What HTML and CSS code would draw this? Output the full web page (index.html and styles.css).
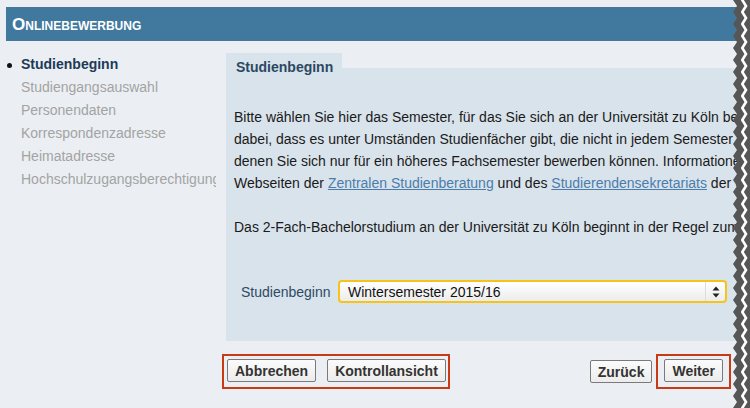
FILE: index.html
```html
<!DOCTYPE html>
<html lang="de">
<head>
<meta charset="utf-8">
<title>Onlinebewerbung</title>
<link rel="stylesheet" href="styles.css">
</head>
<body>
<div class="page">
  <div class="header">Onlinebewerbung</div>
  <div class="columns">
    <ul class="nav">
      <li class="active">Studienbeginn</li>
      <li>Studiengangsauswahl</li>
      <li>Personendaten</li>
      <li>Korrespondenzadresse</li>
      <li>Heimatadresse</li>
      <li>Hochschulzugangsberechtigung</li>
    </ul>
    <div class="main">
      <div class="panel">
        <div class="panel-top">
          <div class="tab">Studienbeginn</div>
          <div class="tab-filler"></div>
        </div>
        <div class="panel-body">
          <p class="text">Bitte wählen Sie hier das Semester, für das Sie sich an der Universität zu Köln bewerben möchten. Beachten Sie<br>dabei, dass es unter Umständen Studienfächer gibt, die nicht in jedem Semester angeboten werden, oder zu<br>denen Sie sich nur für ein höheres Fachsemester bewerben können. Informationen hierzu finden Sie auf den<br>Webseiten der <a href="#">Zentralen Studienberatung</a> und des <a href="#">Studierendensekretariats</a> der Universität.</p>
          <p class="text">Das 2-Fach-Bachelorstudium an der Universität zu Köln beginnt in der Regel zum Wintersemester.</p>
          <div class="field">
            <span class="label">Studienbeginn</span>
            <div class="select">
              <span class="select-value">Wintersemester 2015/16</span>
              <span class="select-arrows">
                <svg width="8" height="12" viewBox="0 0 8 12"><polygon points="4,0.5 7.5,4.5 0.5,4.5" fill="#222"/><polygon points="0.5,7.5 7.5,7.5 4,11.5" fill="#222"/></svg>
              </span>
            </div>
          </div>
        </div>
      </div>
      <div class="actions">
        <div class="hl hl-left">
          <button class="btn">Abbrechen</button>
          <button class="btn">Kontrollansicht</button>
        </div>
        <div class="right-actions">
          <button class="btn">Zurück</button>
          <div class="hl hl-right">
            <button class="btn">Weiter</button>
          </div>
        </div>
      </div>
    </div>
  </div>
  <svg class="tear" width="18" height="408" viewBox="0 0 18 408">
    <defs>
      <pattern id="zz" width="18" height="12" patternUnits="userSpaceOnUse">
        <polygon points="1,0 5,6 1,12 18,12 18,0" fill="#565656"/>
        <polyline points="10,-0.5 14,6 10,12.5" fill="none" stroke="#fff" stroke-width="2.6"/>
      </pattern>
    </defs>
    <rect x="0" y="0" width="18" height="408" fill="url(#zz)"/>
  </svg>
</div>
</body>
</html>
```
FILE: styles.css
```css
html, body {
  margin: 0;
  padding: 0;
}
body {
  background: #ebeff3;
  font-family: "Liberation Sans", Arial, Helvetica, sans-serif;
  font-size: 14px;
  color: #1a1a1a;
  width: 750px;
  height: 408px;
  overflow: hidden;
}
.page {
  position: relative;
  width: 750px;
  height: 408px;
  overflow: hidden;
  padding-top: 7px;
  box-sizing: border-box;
}
.header {
  margin-left: 6px;
  width: 900px;
  height: 34px;
  background: #41799e;
  color: #fff;
  font-weight: bold;
  font-size: 17px;
  font-variant: small-caps;
  line-height: 35px;
  padding-left: 6px;
  box-sizing: border-box;
}
.columns {
  display: flex;
  margin-top: 12px;
  width: 1000px;
}
.nav {
  list-style: none;
  margin: 0;
  padding: 0 0 0 21px;
  width: 195px;
  flex: none;
  overflow: hidden;
  white-space: nowrap;
  margin-right: 10px;
}
.nav li {
  line-height: 23px;
  color: #a3a3a3;
  position: relative;
}
.nav li.active {
  color: #1d3a58;
  font-weight: bold;
}
.nav li.active::before {
  content: "";
  position: absolute;
  left: -14px;
  top: 10px;
  width: 5px;
  height: 5px;
  border-radius: 50%;
  background: #111;
}
.main {
  width: 640px;
  flex: none;
}
.panel-top {
  display: flex;
  height: 27px;
}
.tab {
  width: 116px;
  flex: none;
  background: #d9e3eb;
  box-sizing: border-box;
  padding: 5px 0 0 10px;
  line-height: 18px;
  font-weight: bold;
  color: #2b4863;
}
.tab-filler {
  flex: 1;
  background: linear-gradient(to bottom, transparent 15px, #d9e3eb 15px);
}
.panel-body {
  background: #d9e3eb;
  padding: 26px 0 38px 8px;
}
.text {
  margin: 0 0 22px 0;
  line-height: 22px;
  white-space: nowrap;
}
.text a {
  color: #4a7dab;
  text-decoration: underline;
}
.field {
  display: flex;
  align-items: center;
  padding-left: 7px;
  margin-top: 42px;
}
.label {
  color: #2d4a66;
  width: 97px;
  flex: none;
}
.select {
  width: 389px;
  height: 23px;
  box-sizing: border-box;
  border: 2px solid #f6c419;
  border-radius: 4px;
  background: linear-gradient(to bottom, #ffffff, #ececec);
  display: flex;
  align-items: center;
  justify-content: space-between;
  padding-left: 8px;
}
.select-value {
  color: #111;
}
.select-arrows {
  display: flex;
  align-items: center;
  height: 100%;
  padding: 0 5px 0 6px;
  border-left: 1px solid #dcdcdc;
}
.select-arrows svg {
  display: block;
}
.actions {
  display: flex;
  justify-content: space-between;
  align-items: center;
  width: 509px;
  margin-left: -4px;
  margin-top: 13px;
}
.right-actions {
  display: flex;
  align-items: center;
  gap: 4px;
}
.hl {
  border: 2.5px solid #c93a14;
  display: flex;
  gap: 11px;
  padding: 3px 2px 5px 3px;
}
.hl-right {
  padding: 3px 6px 5px 6px;
}
.btn {
  font-family: "Liberation Sans", Arial, Helvetica, sans-serif;
  font-size: 14px;
  font-weight: bold;
  color: #333;
  height: 23px;
  padding: 0 7px;
  border: 1px solid #7a7a7a;
  border-radius: 2px;
  background: linear-gradient(to bottom, #fbfbfb, #ececec);
  margin: 0;
}
.tear {
  position: absolute;
  top: 0;
  right: 0;
  display: block;
}
```
